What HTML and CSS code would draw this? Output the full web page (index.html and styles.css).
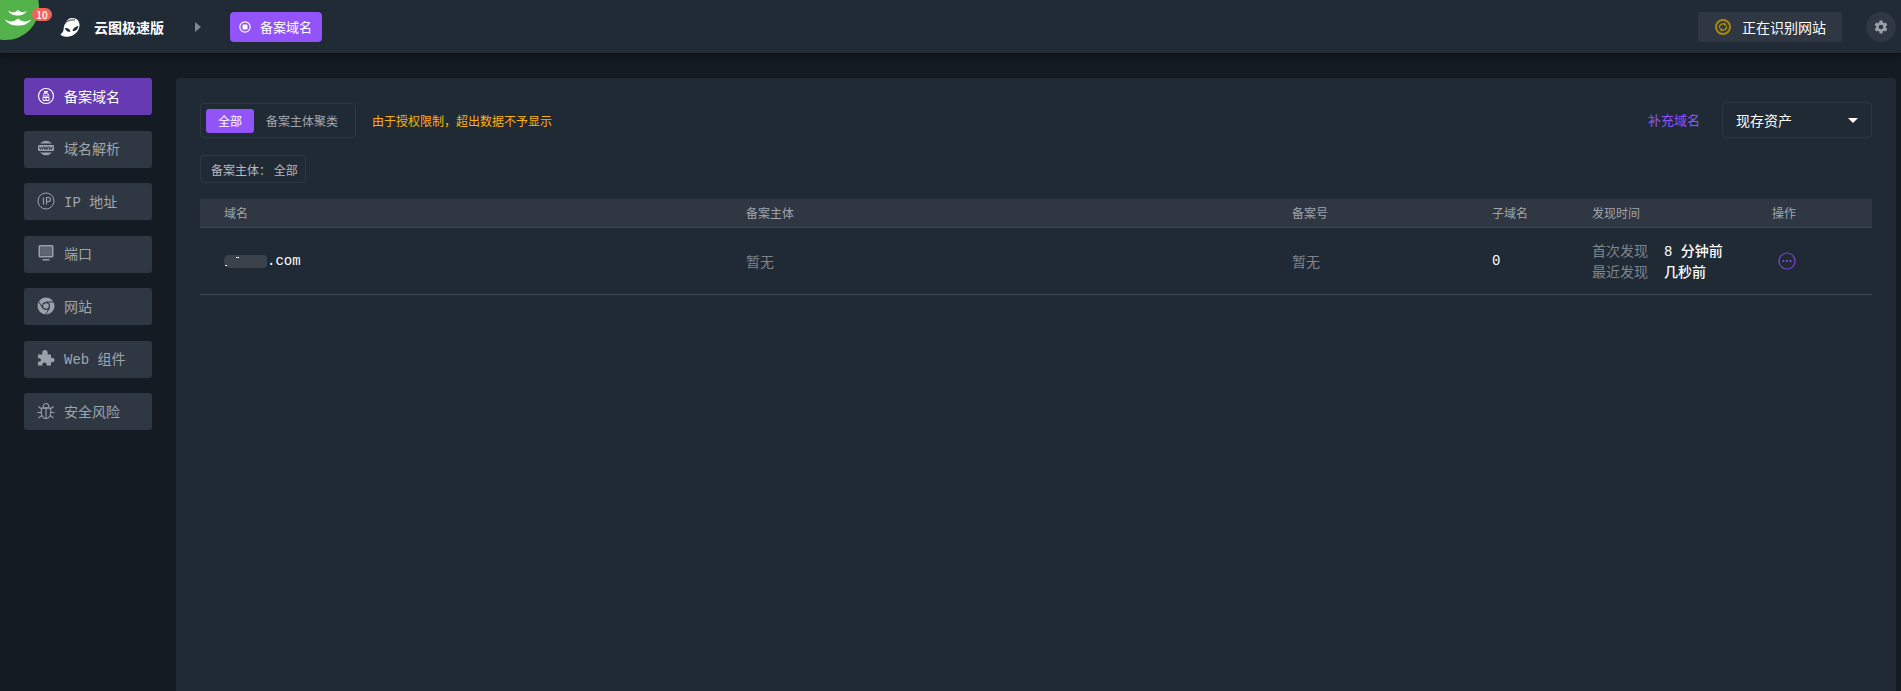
FILE: index.html
```html
<!DOCTYPE html>
<html lang="en">
<head>
    <meta charset="UTF-8">
    <meta name="viewport" content="width=device-width, initial-scale=1.0">
    <title>云图极速版 - 备案域名</title>
    <link rel="stylesheet" href="styles.css">
</head>
<body>
    <header class="topbar">
        <div class="logo-wrap">
            <div class="logo">
                <svg width="26" height="16" viewBox="0 0 26 16" fill="#fff">
                    <path d="M3 0.5 C7 3 10 2.8 13 0 C16 2.8 19 3 22 0.5 C20 4.5 16 5.5 13 5.5 C9 5.5 5 4.5 3 0.5 Z"/>
                    <path d="M0 9.5 C5 12.5 9 12 13 8.5 C17 12 21 12.5 26 9.5 C23 14.5 18 15.5 13 15.5 C8 15.5 3 14.5 0 9.5 Z"/>
                </svg>
            </div>
            <span class="badge">10</span>
        </div>
        <svg class="alien" width="20" height="20" viewBox="0 0 20 20">
            <path fill="#fff" d="M12 1 C17 1 20 4.5 19.5 9 C19 14 15 18.5 9 19.5 C5 20 1 19.5 0.5 17 C2 16.5 3 15 3.5 13 C4 7 7 1 12 1 Z"/>
            <path fill="#212b36" d="M5 11 C7.5 10.5 10 12 10.5 14.5 C8 15.5 5.5 14 5 11 Z M18.5 9 C16 9.5 13 11 12.5 14 C15.5 14.5 18 12.5 18.5 9 Z"/>
            <path fill="none" stroke="#212b36" stroke-width="1" d="M4.5 7 C7 3.5 11 2.5 15 3"/>
        </svg>
        <span class="product">云图极速版</span>
        <span class="crumb-arrow"></span>
        <a class="crumb" href="#">
            <svg width="12" height="12" viewBox="0 0 12 12"><circle cx="6" cy="6" r="5.2" fill="none" stroke="#fff" stroke-width="1.2"/><rect x="3.5" y="3.5" width="5" height="5" rx="1.2" fill="#fff"/></svg>
            <span>备案域名</span>
        </a>
        <div class="topbar-right">
            <div class="status">
                <svg width="16" height="16" viewBox="0 0 16 16" fill="none" stroke="#a98712"><circle cx="8" cy="8" r="7" stroke-width="2"/><path stroke-width="1.5" d="M4.4 9 C4 5.8 7.2 3.8 10 5.4 M11.6 7 C12 10.2 8.8 12.2 6 10.6"/><path fill="#a98712" stroke="none" d="M9 3.2 L12 6 L8.8 7 Z M7 12.8 L4 10 L7.2 9 Z"/></svg>
                <span>正在识别网站</span>
            </div>
            <div class="gear">
                <svg width="14" height="14" viewBox="0 0 24 24" fill="#9aa1a9"><path fill-rule="evenodd" d="M14.5 1 L15.2 4.3 C15.9 4.6 16.5 5 17.1 5.4 L20.3 4.3 L22.8 8.7 L20.3 10.9 C20.4 11.6 20.4 12.4 20.3 13.1 L22.8 15.3 L20.3 19.7 L17.1 18.6 C16.5 19 15.9 19.4 15.2 19.7 L14.5 23 L9.5 23 L8.8 19.7 C8.1 19.4 7.5 19 6.9 18.6 L3.7 19.7 L1.2 15.3 L3.7 13.1 C3.6 12.4 3.6 11.6 3.7 10.9 L1.2 8.7 L3.7 4.3 L6.9 5.4 C7.5 5 8.1 4.6 8.8 4.3 L9.5 1 Z M12 8 A4 4 0 1 0 12 16 A4 4 0 1 0 12 8 Z"/></svg>
            </div>
        </div>
    </header>

    <div class="layout">
        <nav class="sidebar">
            <a class="side-item active" href="#">
                <svg width="18" height="18" viewBox="0 0 18 18" fill="none" stroke="#fff"><circle cx="9" cy="9" r="7.5" stroke-width="1.2"/><path stroke-width="1" d="M7 4.5 H11 L6 7.5 M7 5.5 L12 7.5 M5.5 9 H12.5 M6 10.5 H12 V13.5 H6 Z M9 10.5 V13.5"/></svg>
                <span>备案域名</span>
            </a>
            <a class="side-item" href="#">
                <svg width="18" height="18" viewBox="0 0 18 18"><path fill="#9aa1a9" d="M3 4.5 A8 8 0 0 1 15 4.5 Z M3 13.5 H15 A8 8 0 0 1 3 13.5 Z"/><rect x="1" y="6" width="16" height="6" fill="#9aa1a9" rx="1"/><path fill="none" stroke="#2e3742" stroke-width="0.9" d="M2.5 7.5 L3.5 10.5 L4.5 8 L5.5 10.5 L6.5 7.5 M7 7.5 L8 10.5 L9 8 L10 10.5 L11 7.5 M11.5 7.5 L12.5 10.5 L13.5 8 L14.5 10.5 L15.5 7.5"/></svg>
                <span>域名解析</span>
            </a>
            <a class="side-item" href="#">
                <svg width="18" height="18" viewBox="0 0 18 18" fill="none" stroke="#9aa1a9"><circle cx="9" cy="9" r="8" stroke-width="1"/><path stroke-width="1.1" d="M6.5 5.5 V12.5 M9.5 12.5 V5.5 H11.5 A2 2 0 0 1 11.5 9.5 H9.5"/></svg>
                <span><span class="mono">IP </span>地址</span>
            </a>
            <a class="side-item" href="#">
                <svg width="18" height="18" viewBox="0 0 18 18" fill="#9aa1a9"><path fill-rule="evenodd" d="M3 1 H15 A1.5 1.5 0 0 1 16.5 2.5 V12 A1.5 1.5 0 0 1 15 13.5 H3 A1.5 1.5 0 0 1 1.5 12 V2.5 A1.5 1.5 0 0 1 3 1 Z M3.2 2.7 V11.8 H14.8 V2.7 Z"/><rect x="3.2" y="2.7" width="11.6" height="9.1" fill="#5d6670"/><rect x="5.5" y="15" width="7" height="1.5"/></svg>
                <span>端口</span>
            </a>
            <a class="side-item" href="#">
                <svg width="18" height="18" viewBox="0 0 18 18"><circle cx="9" cy="9" r="8.5" fill="#9aa1a9"/><circle cx="9" cy="9" r="4" fill="#2e3742"/><circle cx="9" cy="9" r="2.8" fill="#9aa1a9"/><path fill="none" stroke="#2e3742" stroke-width="1" d="M9 5 H17 M5.5 11 L2 5 M12.5 11 L8.5 17.4"/></svg>
                <span>网站</span>
            </a>
            <a class="side-item" href="#">
                <svg width="18" height="18" viewBox="0 0 18 18" fill="#9aa1a9"><path d="M1 5.5 H5.5 C5 4 5 1 8 1 C11 1 11 4 10.5 5.5 H14 V9 C15.5 8.5 17.5 9 17.5 11 C17.5 13 15.5 13.5 14 13 V16.5 H9.5 C10 15 9.5 13.5 7.5 13.5 C5.5 13.5 5 15 5.5 16.5 H1 V12.5 C2.5 13 4 12.5 4 11 C4 9.5 2.5 9 1 9.5 Z"/></svg>
                <span><span class="mono">Web </span>组件</span>
            </a>
            <a class="side-item" href="#">
                <svg width="18" height="18" viewBox="0 0 18 18" fill="none" stroke="#9aa1a9" stroke-width="1.1"><path d="M6 6 C6 3.5 7 1.5 9 1.5 C11 1.5 12 3.5 12 6 Z"/><path d="M5 6 H13 C14 8 14 10 13.5 12 C13 14.5 11 16.5 9 16.5 C7 16.5 5 14.5 4.5 12 C4 10 4 8 5 6 Z"/><path d="M9 6 V16.5 M1.5 4.5 L4.5 7 M16.5 4.5 L13.5 7 M0.5 10.5 H4 M17.5 10.5 H14 M1.5 16 L5 13.5 M16.5 16 L13 13.5"/></svg>
                <span>安全风险</span>
            </a>
        </nav>

        <main class="card">
            <div class="toolbar">
                <div class="tabs">
                    <span class="tab tab-on">全部</span>
                    <span class="tab">备案主体聚类</span>
                </div>
                <span class="notice">由于授权限制，超出数据不予显示</span>
                <a class="supplement" href="#">补充域名</a>
                <div class="select">现存资产<span class="caret"></span></div>
            </div>
            <div class="filter">备案主体： 全部</div>

            <table class="domains">
                <thead>
                    <tr>
                        <th class="col-domain">域名</th>
                        <th class="col-owner">备案主体</th>
                        <th class="col-record">备案号</th>
                        <th class="col-sub">子域名</th>
                        <th class="col-time">发现时间</th>
                        <th>操作</th>
                    </tr>
                </thead>
                <tbody>
                    <tr>
                        <td class="strong mono"><span class="smudge"></span>.com</td>
                        <td class="muted">暂无</td>
                        <td class="muted">暂无</td>
                        <td class="strong mono">0</td>
                        <td>
                            <div class="time-row"><span class="muted">首次发现</span><span class="strong"><span class="mono">8 </span>分钟前</span></div>
                            <div class="time-row"><span class="muted">最近发现</span><span class="strong">几秒前</span></div>
                        </td>
                        <td>
                            <svg class="more" width="18" height="18" viewBox="0 0 18 18"><circle cx="9" cy="9" r="8" fill="none" stroke="#7b45d6" stroke-width="1.2"/><circle cx="5.5" cy="9" r="1" fill="#8f55f5"/><circle cx="9" cy="9" r="1" fill="#8f55f5"/><circle cx="12.5" cy="9" r="1" fill="#8f55f5"/></svg>
                        </td>
                    </tr>
                </tbody>
            </table>
        </main>
    </div>
</body>
</html>
```

FILE: styles.css
```css
* {
    box-sizing: border-box;
}
html, body {
    height: 100%;
}
body {
    margin: 0;
    overflow: hidden;
    background-color: #151b23;
    color: #fff;
    font-family: "Noto Sans CJK SC", "Noto Sans", sans-serif;
    font-size: 12px;
}
a {
    color: inherit;
    text-decoration: none;
}
.mono {
    font-family: "Liberation Mono", "Noto Sans CJK SC", monospace;
}

/* top bar */
.topbar {
    position: relative;
    height: 53px;
    padding-right: 5px;
    display: flex;
    align-items: center;
    background-color: #212b36;
    box-shadow: 0 2px 8px rgba(0, 0, 0, 0.5);
}
.logo-wrap {
    width: 60px;
    height: 53px;
    flex-shrink: 0;
}
.logo {
    position: absolute;
    top: -26px;
    left: -27px;
    width: 66px;
    height: 66px;
    border-radius: 50%;
    background-color: #54b24b;
}
.logo svg {
    position: absolute;
    left: 32px;
    top: 36px;
}
.badge {
    position: absolute;
    top: 8px;
    left: 32px;
    width: 20px;
    height: 13px;
    border-radius: 7px;
    background-color: #f2645a;
    font-size: 10px;
    line-height: 13px;
    font-weight: 500;
    text-align: center;
}
.alien {
    margin-right: 14px;
}
.product {
    font-size: 14px;
    font-weight: 700;
}
.crumb-arrow {
    width: 0;
    height: 0;
    margin: 0 29px 0 31px;
    border-left: 6px solid #7f858c;
    border-top: 5px solid transparent;
    border-bottom: 5px solid transparent;
}
.crumb {
    width: 92px;
    height: 30px;
    padding-left: 9px;
    display: flex;
    align-items: center;
    gap: 9px;
    border-radius: 4px;
    background-color: #9254f9;
    font-size: 13px;
}
.topbar-right {
    margin-left: auto;
    display: flex;
    align-items: center;
    gap: 24px;
}
.status {
    width: 144px;
    height: 30px;
    padding-left: 17px;
    display: flex;
    align-items: center;
    gap: 11px;
    border-radius: 4px;
    background-color: #2e3742;
    font-size: 14px;
}
.gear {
    width: 30px;
    height: 30px;
    display: flex;
    align-items: center;
    justify-content: center;
    border-radius: 50%;
    background-color: #2e3742;
}

/* layout */
.layout {
    height: calc(100% - 53px);
    padding: 25px 5px 0 24px;
    display: flex;
}
.sidebar {
    width: 128px;
    margin-right: 24px;
    flex-shrink: 0;
    display: flex;
    flex-direction: column;
    gap: 15.5px;
}
.side-item {
    height: 37px;
    padding: 0 0 2px 13px;
    display: flex;
    align-items: center;
    gap: 9px;
    border-radius: 3px;
    background-color: #2e3742;
    color: #a0a6ad;
    font-size: 14px;
}
.side-item.active {
    background-color: #663ab0;
    color: #fff;
}
.side-item svg {
    flex-shrink: 0;
}

/* main card */
.card {
    flex: 1;
    padding: 24px 24px 0;
    border-radius: 4px 4px 0 0;
    background-color: #202a35;
}
.toolbar {
    display: flex;
    align-items: flex-end;
    height: 36px;
}
.tabs {
    width: 156px;
    height: 35px;
    padding: 5px;
    display: flex;
    align-items: center;
    border: 1px solid #2e3742;
    border-radius: 4px;
}
.tab {
    height: 24px;
    line-height: 24px;
    padding: 0 12px;
    color: #a0a6ad;
}
.tab-on {
    width: 48px;
    border-radius: 3px;
    background-color: #9254f9;
    color: #fff;
}
.notice {
    margin-left: 16px;
    align-self: center;
    color: #fdb10e;
}
.supplement {
    margin: 0 22px 2px auto;
    align-self: center;
    color: #8f55f5;
    font-size: 13px;
}
.select {
    position: relative;
    width: 150px;
    height: 36px;
    padding-left: 13px;
    line-height: 34px;
    border: 1px solid #2e3742;
    border-radius: 4px;
    font-size: 14px;
}
.caret {
    position: absolute;
    right: 13px;
    top: 15px;
    width: 0;
    height: 0;
    border-top: 5px solid #fff;
    border-left: 5px solid transparent;
    border-right: 5px solid transparent;
}
.filter {
    width: 106px;
    height: 28px;
    margin-top: 17px;
    padding-left: 10px;
    line-height: 27px;
    border: 1px solid #2e3742;
    border-radius: 4px;
    color: #b4b9bf;
    white-space: pre;
}

/* table */
.domains {
    width: 100%;
    margin-top: 16px;
    border-collapse: collapse;
    table-layout: fixed;
}
.domains th {
    height: 28px;
    padding: 0 0 0 24px;
    border-bottom: 1px solid #3d4652;
    background-color: #2e3742;
    color: #a0a6ad;
    font-weight: 400;
    text-align: left;
}
.domains td {
    height: 67px;
    padding: 0 0 0 24px;
    border-bottom: 1px solid #3d4652;
    font-size: 14px;
}
.col-domain { width: 522px; }
.col-owner { width: 546px; }
.col-record { width: 200px; }
.col-sub { width: 100px; }
.col-time { width: 180px; }
.strong {
    color: #fff;
    font-weight: 500;
}
.muted {
    color: #7f858c;
}
/* blurred-out part of the domain */
.smudge {
    position: relative;
    display: inline-block;
    width: 43px;
    height: 13px;
    vertical-align: -3px;
    border-radius: 5px 3px 4px 6px;
    background-color: #3a424c;
}
.smudge::before,
.smudge::after {
    content: "";
    position: absolute;
    height: 1px;
    background-color: #fff;
}
.smudge::before {
    top: 2px;
    left: 12px;
    width: 3px;
}
.smudge::after {
    top: 10px;
    left: 1px;
    width: 2px;
}
.time-row {
    display: flex;
    gap: 16px;
    height: 21px;
    line-height: 21px;
}
.more {
    display: block;
    margin-left: 6px;
}
```
